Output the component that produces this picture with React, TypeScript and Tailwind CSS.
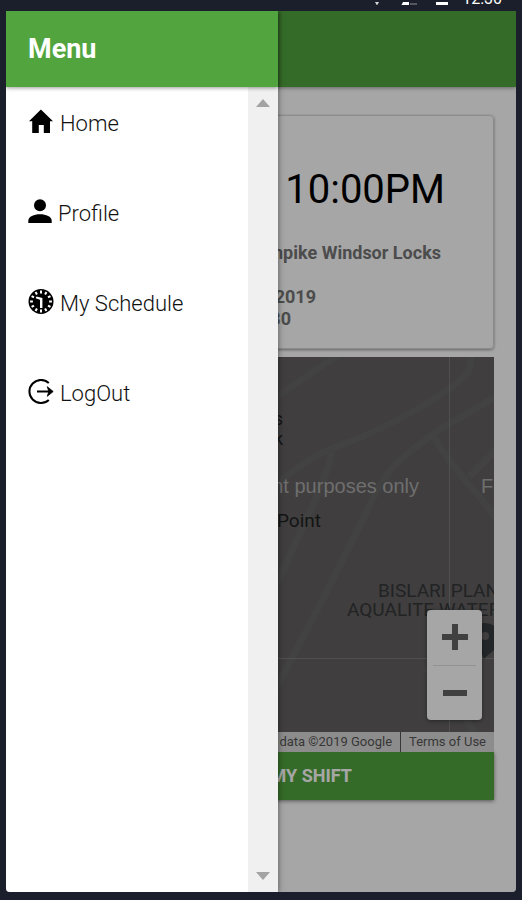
import React from "react";

interface MenuItem {
  label: string;
  icon: React.ReactNode;
}

const HomeIcon = () => (
  <svg viewBox="0 0 26 26" className="w-[26px] h-[26px]" fill="currentColor">
    <path d="M12.9 0.5L25 12.2h-3V24h-6.2v-8h-5v8H4.2V12.2H1z" />
  </svg>
);

const PersonIcon = () => (
  <svg viewBox="0 0 24 26" className="w-6 h-[26px]" fill="currentColor">
    <circle cx="12" cy="6.2" r="6" />
    <path d="M0.3 24v-2.2C0.3 17.6 6 15.3 12 15.3s11.7 2.3 11.7 6.5V24z" />
  </svg>
);

const HOURS = [0, 30, 60, 90, 120, 150, 180, 210, 240, 270, 300, 330];

const ClockIcon = () => (
  <svg viewBox="0 0 26 26" className="w-[26px] h-[26px]">
    <circle cx="13" cy="12.5" r="12.5" fill="black" />
    {HOURS.map((angle) => (
      <path
        key={angle}
        d="M13 1.6v2.8"
        stroke="white"
        strokeWidth="2"
        transform={`rotate(${angle} 13 12.5)`}
      />
    ))}
    <path d="M7.6 9.2l1-1.8 5.8 1.6V19h-2.4v-8.2z" fill="white" />
  </svg>
);

const LogoutIcon = () => (
  <svg viewBox="0 0 26 26" className="w-[26px] h-[26px]" fill="none" stroke="currentColor">
    <path d="M20.8 3.9a11.6 11.6 0 1 0 0 17.2" strokeWidth="2" />
    <path d="M9 12.5h13" strokeWidth="2" />
    <path d="M19.3 7.7l5.9 4.8-5.9 4.8 1.5-4.8z" fill="currentColor" strokeWidth="0.8" />
  </svg>
);

const menuItems: MenuItem[] = [
  { label: "Home", icon: <HomeIcon /> },
  { label: "Profile", icon: <PersonIcon /> },
  { label: "My Schedule", icon: <ClockIcon /> },
  { label: "LogOut", icon: <LogoutIcon /> },
];

function StatusBar() {
  return (
    <div className="h-[11px] shrink-0">
      <div className="h-[5px] overflow-hidden flex items-end justify-end pr-[14px] text-white">
        <svg viewBox="0 0 76 5" className="w-[76px] h-[5px] mr-3">
          <path d="M1 2h4L3 5.5z" fill="#d4d4d4" />
          <path d="M29 2h6v4h-8z" fill="white" />
          <path d="M36 3h7v3h-7z" fill="#55575f" />
          <path d="M62 2h12v4H62z" fill="white" />
        </svg>
        <span className="text-base leading-3">12:30</span>
      </div>
    </div>
  );
}

function ShiftCard() {
  return (
    <section className="h-[234px] border border-[#d6d6d6] rounded-sm shadow-[0_1px_3px_rgba(0,0,0,0.4)] text-right overflow-hidden">
      <p className="mt-[50px] pr-[48px] text-[40px] leading-[48px] text-black">10:00PM</p>
      <div className="mt-[28px] text-lg leading-[22px] font-bold text-[#757575]">
        <p className="pr-[52px]">Turnpike Windsor Locks</p>
        <p className="mt-[22px] pr-[177px]">2019</p>
        <p className="pr-[202px]">30</p>
      </div>
    </section>
  );
}

function ShiftMap() {
  return (
    <div className="relative h-[395px] mt-2 overflow-hidden bg-[#636061]">
      <svg
        viewBox="0 0 220 375"
        className="absolute top-0 right-0 w-[220px] h-[375px]"
        fill="none"
      >
        <g stroke="#646665" strokeWidth="7">
          <path d="M-10 48L70 -6" />
          <path d="M0 130C40 95 50 95 80 83S150 50 175 32S195 12 198 -4" />
          <path d="M225 38L165 73C120 105 110 115 95 150L50 240L0 335" />
          <path d="M58 95C50 130 30 165 4 225" />
          <path d="M160 80C180 115 200 130 225 165" />
          <path d="M225 90L195 120" />
          <path d="M150 310L175 335L200 375" />
        </g>
        <path d="M175.5 0v375M0 301.5h220" stroke="#7a7d7c" strokeWidth="1" />
        <path
          d="M211 266a16 16 0 0 1 16 16c0 9-10 12-17 20c-3-10-15-12-15-20a16 16 0 0 1 16-16z"
          fill="#353b3f"
        />
        <circle cx="211" cy="279" r="4" fill="#636061" />
      </svg>

      {/* Map labels */}
      <span className="absolute top-[52px] right-[211px] text-lg leading-5 text-[#202020]">s</span>
      <span className="absolute top-[72px] right-[211px] text-lg leading-5 text-[#202020]">k</span>
      <span className="absolute top-[117px] right-[75px] text-xl leading-6 whitespace-nowrap text-[#aaa] font-['Liberation_Sans',sans-serif]">
        For development purposes only
      </span>
      <span className="absolute top-[117px] left-[calc(100%-13px)] text-xl leading-6 whitespace-nowrap text-[#aaa] font-['Liberation_Sans',sans-serif]">
        For
      </span>
      <span className="absolute top-[153px] right-[173px] text-[19px] leading-[22px] text-[#202020]">
        Point
      </span>
      <span className="absolute top-[224px] left-[calc(100%-116px)] text-[19px] leading-[19px] whitespace-nowrap text-[#343638]">
        BISLARI PLANT
      </span>
      <span className="absolute top-[243px] left-[calc(100%-147px)] text-[19px] leading-[19px] whitespace-nowrap text-[#343638]">
        AQUALITE WATER
      </span>

      {/* Zoom control */}
      <div className="absolute top-[253px] right-3 w-[55px] h-[110px] px-1.5 flex flex-col rounded-sm bg-white shadow-[0_1px_4px_rgba(0,0,0,0.4)]">
        <button aria-label="Zoom in" className="flex-1 flex items-center justify-center border-b border-[#e0e0e0]">
          <svg viewBox="0 0 26 26" className="w-[26px] h-[26px]" fill="#636363">
            <path d="M10 0h6v10h10v6H16v10h-6V16H0v-6h10z" />
          </svg>
        </button>
        <button aria-label="Zoom out" className="flex-1 flex items-center justify-center">
          <svg viewBox="0 0 26 26" className="w-[26px] h-[26px]" fill="#636363">
            <path d="M1 10h24v6H1z" />
          </svg>
        </button>
      </div>

      <div className="absolute inset-x-0 bottom-0 h-5 flex justify-end bg-[#d8d8d8] text-[13px] leading-5 text-[#555] whitespace-nowrap">
        <span className="px-2">Map data ©2019 Google</span>
        <a href="#terms" className="px-2 border-l border-[#555]">
          Terms of Use
        </a>
      </div>
    </div>
  );
}

function Drawer() {
  return (
    <aside className="absolute inset-y-0 left-0 w-[272px] flex flex-col bg-white shadow-[0_0_6px_rgba(0,0,0,0.5)]">
      <header className="h-[76px] shrink-0 flex items-center px-[22px] bg-[#52a53e] shadow-[0_1px_4px_rgba(0,0,0,0.4)] z-10">
        <h2 className="text-[27px] leading-8 font-bold text-white">Menu</h2>
      </header>

      <div className="flex-1 flex">
        <nav className="flex-1 pt-[22px] pl-[22px]">
          <ul className="flex flex-col gap-[60px]">
            {menuItems.map((item) => (
              <li key={item.label}>
                <a href="#" className="h-[30px] flex items-start gap-1.5 text-black">
                  {item.icon}
                  <span className="text-[22px] leading-[30px] font-light text-[#111]">
                    {item.label}
                  </span>
                </a>
              </li>
            ))}
          </ul>
        </nav>

        {/* Scroll track */}
        <div className="w-[30px] flex flex-col items-center justify-between py-3 bg-[#f0f0f0]">
          <button aria-label="Scroll up">
            <svg viewBox="0 0 14 8" className="w-[14px] h-2" fill="#a3a3a3">
              <path d="M7 0l7 8H0z" />
            </svg>
          </button>
          <button aria-label="Scroll down">
            <svg viewBox="0 0 14 8" className="w-[14px] h-2" fill="#a3a3a3">
              <path d="M0 0h14L7 8z" />
            </svg>
          </button>
        </div>
      </div>
    </aside>
  );
}

export default function App() {
  return (
    <div className="min-h-screen flex flex-col px-1.5 pb-2 bg-[#1b1f2b] font-[Roboto,sans-serif]">
      <StatusBar />
      <div className="relative flex-1 flex flex-col rounded-b overflow-hidden bg-white">
        <header className="h-[76px] shrink-0 bg-[#52a53e] shadow-[0_1px_4px_rgba(0,0,0,0.4)]" />
        <main className="flex-1 pt-7 px-[22px]">
          <ShiftCard />
          <ShiftMap />
          <button className="w-full h-12 pr-[142px] text-right text-lg font-bold text-white bg-[#52a53e] shadow-[0_1px_4px_rgba(0,0,0,0.5)]">
            MY SHIFT
          </button>
        </main>

        {/* Backdrop */}
        <div className="absolute inset-0 bg-black/35" />
        <Drawer />
      </div>
    </div>
  );
}
